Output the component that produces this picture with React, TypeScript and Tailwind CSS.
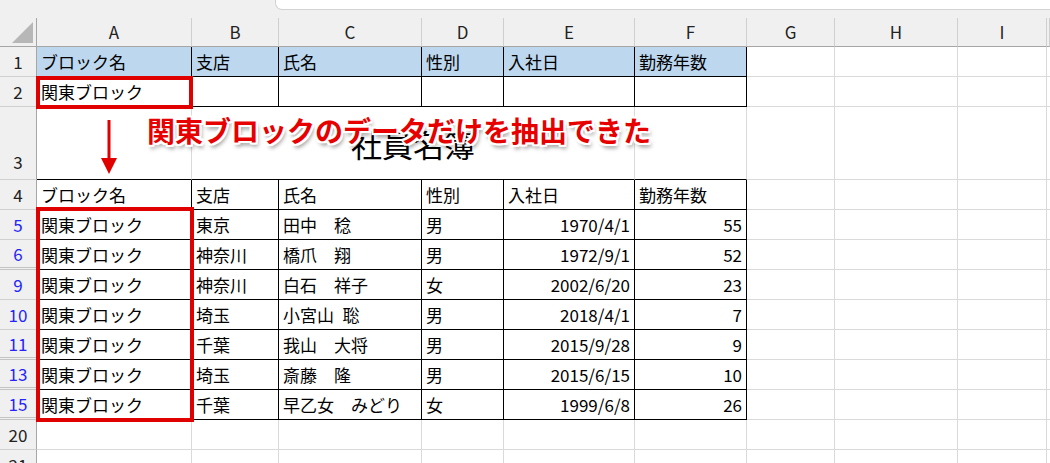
import { Fragment } from "react"
import clsx from "clsx"

const letters = ["A", "B", "C", "D", "E", "F", "G", "H", "I", ""]

const heads = ["ブロック名", "支店", "氏名", "性別", "入社日", "勤務年数"]

type Row = {
  n: string
  cells?: string[]
  blue?: boolean
  double?: boolean
  table?: boolean
  fill?: boolean
  title?: boolean
  tall?: boolean
}

const rows: Row[] = [
  { n: "1", cells: heads, table: true, fill: true },
  { n: "2", cells: ["関東ブロック", "", "", "", "", ""], table: true },
  { n: "3", title: true, tall: true },
  { n: "4", cells: heads, table: true },
  { n: "5", blue: true, table: true, cells: ["関東ブロック", "東京", "田中　稔", "男", "1970/4/1", "55"] },
  { n: "6", blue: true, table: true, double: true, cells: ["関東ブロック", "神奈川", "橋爪　翔", "男", "1972/9/1", "52"] },
  { n: "9", blue: true, table: true, cells: ["関東ブロック", "神奈川", "白石　祥子", "女", "2002/6/20", "23"] },
  { n: "10", blue: true, table: true, cells: ["関東ブロック", "埼玉", "小宮山\u2002聡", "男", "2018/4/1", "7"] },
  { n: "11", blue: true, table: true, double: true, cells: ["関東ブロック", "千葉", "我山　大将", "男", "2015/9/28", "9"] },
  { n: "13", blue: true, table: true, double: true, cells: ["関東ブロック", "埼玉", "斎藤　隆", "男", "2015/6/15", "10"] },
  { n: "15", blue: true, table: true, double: true, cells: ["関東ブロック", "千葉", "早乙女　みどり", "女", "1999/6/8", "26"] },
  { n: "20" },
  { n: "21" },
]

function RowHead({ row }: { row: Row }) {
  return (
    <div
      className={clsx(
        "flex justify-center border-r border-r-[#a6a6a6] bg-[#f0f0f0] text-[17px]",
        row.tall ? "h-[73px] items-end pb-[5px]" : "h-[30px] items-center",
        row.double ? "border-b-[3px] border-b-[#c4c4c4] border-double" : "border-b border-b-[#d0d0d0]",
        row.blue ? "text-[#2424ff]" : "text-[#222]"
      )}
    >
      {row.n}
    </div>
  )
}

function Cell({
  text,
  right,
  bottom,
  alignRight,
  fill,
  tall,
}: {
  text?: string
  right?: boolean
  bottom?: boolean
  alignRight?: boolean
  fill?: boolean
  tall?: boolean
}) {
  return (
    <div
      className={clsx(
        "flex items-center overflow-hidden whitespace-nowrap border-r border-b pl-[4px] pr-[4px] text-[17px] text-black",
        tall ? "h-[73px]" : "h-[30px]",
        right ? "border-r-black" : "border-r-[#dadada]",
        bottom ? "border-b-black" : "border-b-[#dadada]",
        alignRight ? "justify-end" : "justify-start",
        fill && "bg-[#bdd7ee]"
      )}
    >
      {text}
    </div>
  )
}

export default function App() {
  return (
    <div className="relative h-[463px] w-[1050px] overflow-hidden bg-white font-['Noto_Sans_CJK_JP',sans-serif]">
      {/* formula bar strip */}
      <div className="flex h-[18px] bg-[#f0f0f0]">
        <div className="w-[275px]" />
        <div className="h-[10px] flex-1 rounded-bl-[7px] border-b border-l border-[#d2d2d2] bg-white" />
      </div>

      <div className="grid grid-cols-[37px_155px_87px_143px_82px_131px_112px_88px_123px_89px_1fr]">
        {/* column headers */}
        <div className="relative h-[29px] border-r border-b border-r-[#a6a6a6] border-b-[#a6a6a6] bg-[#f0f0f0]">
          <svg className="absolute left-[12px] top-[4px]" width="22" height="22" viewBox="0 0 22 22">
            <polygon points="21,0 21,21 0,21" fill="#b7b7b7" />
          </svg>
        </div>
        {letters.map((l, i) => (
          <div
            key={i}
            className="flex h-[29px] items-center justify-center border-r border-b border-r-[#cfcfcf] border-b-[#a6a6a6] bg-[#f0f0f0] text-[17px] text-[#222]"
          >
            {l}
          </div>
        ))}

        {rows.map((row) => (
          <Fragment key={row.n}>
            <RowHead row={row} />
            {row.title ? (
              <>
                <Cell tall bottom />
                <div className="col-span-4 flex h-[73px] items-end justify-center border-r border-b border-r-[#dadada] border-b-black pb-[20px] text-[31px] leading-none text-black">
                  社員名簿
                </div>
                <Cell tall bottom />
              </>
            ) : (
              [0, 1, 2, 3, 4, 5].map((c) => (
                <Cell
                  key={c}
                  text={row.cells?.[c]}
                  right={row.table}
                  bottom={row.table}
                  alignRight={c >= 4 && row.n !== "1" && row.n !== "4"}
                  fill={row.fill}
                />
              ))
            )}
            <Cell tall={row.tall} />
            <Cell tall={row.tall} />
            <Cell tall={row.tall} />
            <div className={clsx("border-b border-b-[#dadada]", row.tall ? "h-[73px]" : "h-[30px]")} />
          </Fragment>
        ))}
      </div>

      {/* red highlight boxes */}
      <div className="absolute left-[36px] top-[76px] h-[33px] w-[157px] border-4 border-[#e00000]" />
      <div className="absolute left-[36px] top-[207px] h-[215px] w-[158px] border-4 border-[#e00000]" />

      {/* arrow */}
      <svg className="absolute left-[100px] top-[118px]" width="18" height="58" viewBox="0 0 18 58">
        <line x1="9" y1="2" x2="9" y2="44" stroke="#e00000" strokeWidth="3" />
        <polygon points="1,40 17,40 9,56" fill="#e00000" />
      </svg>

      {/* annotation */}
      <div className="absolute left-[147px] top-[116px] whitespace-nowrap text-[28px] font-bold leading-none text-[#e60000] [text-shadow:-2px_-2px_0_#fff,2px_-2px_0_#fff,-2px_2px_0_#fff,2px_2px_0_#fff,0_2px_0_#fff,0_-2px_0_#fff,2px_0_0_#fff,-2px_0_0_#fff,2px_4px_4px_rgba(0,0,0,0.45)]">
        関東ブロックのデータだけを抽出できた
      </div>
    </div>
  )
}
